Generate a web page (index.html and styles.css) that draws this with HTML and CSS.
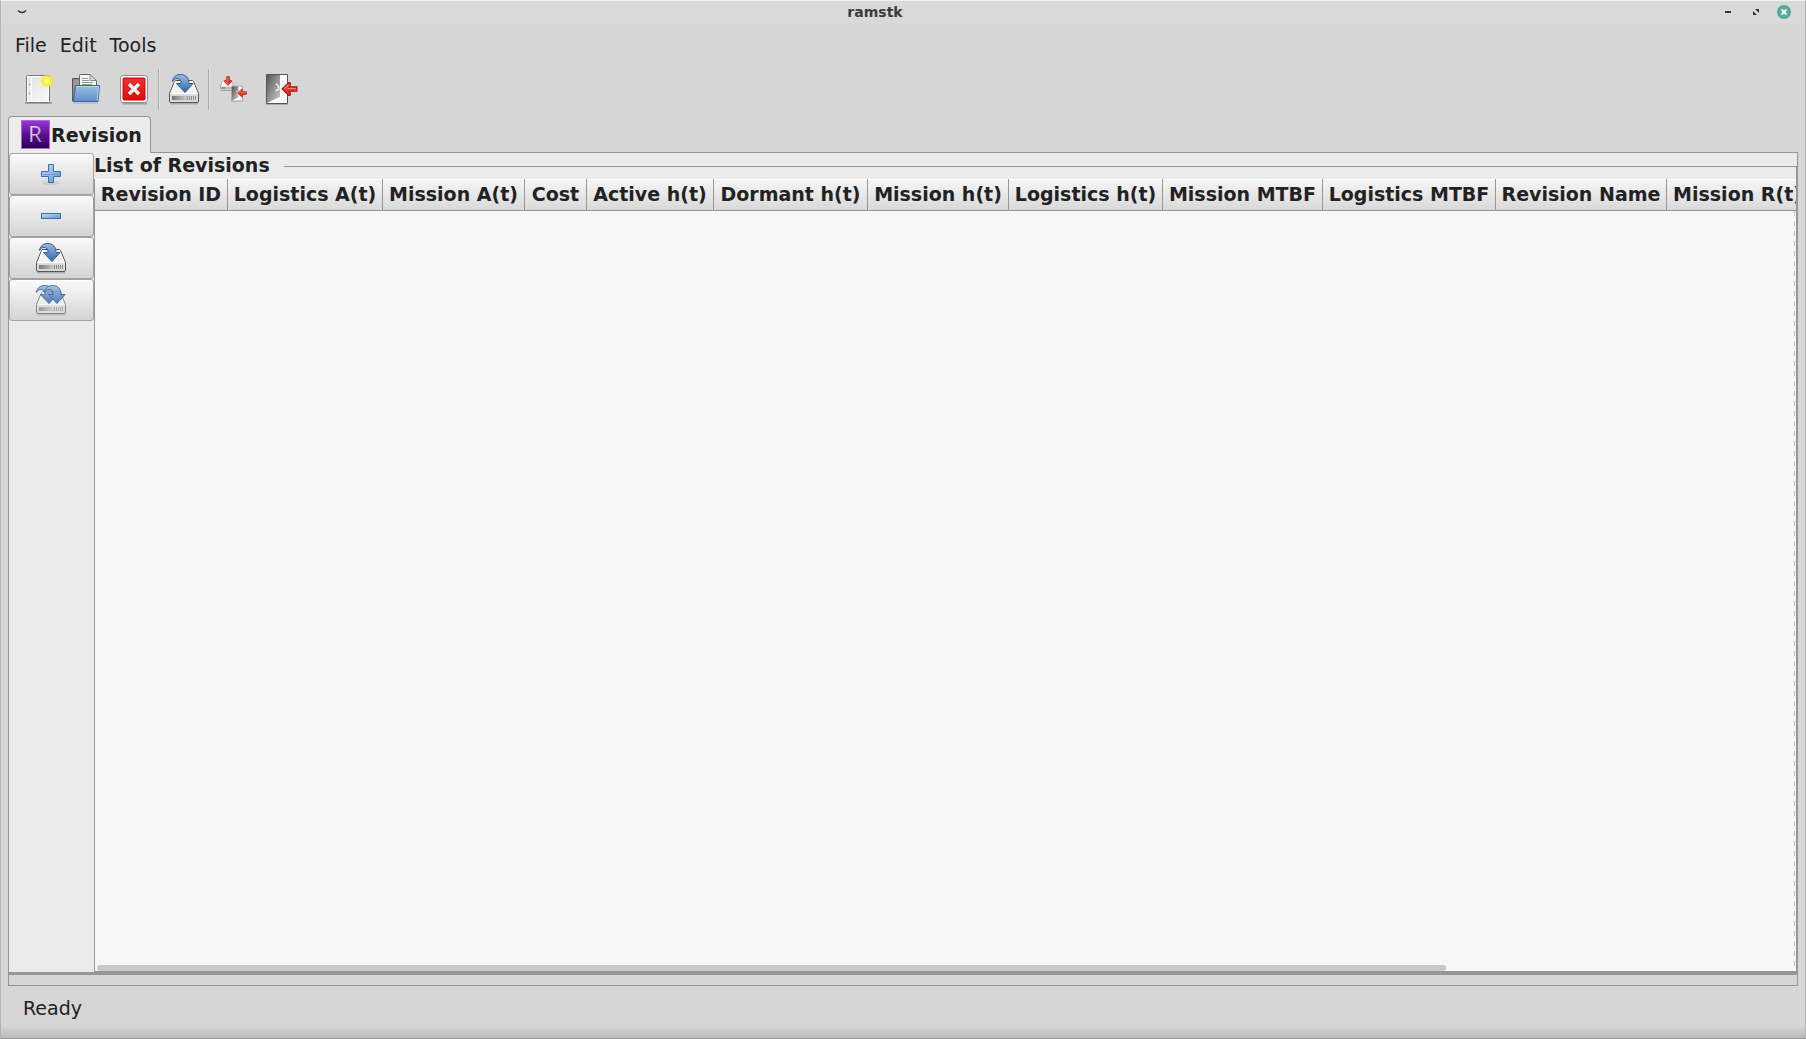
FILE: index.html
```html
<!DOCTYPE html>
<html lang="en">
<head>
<meta charset="utf-8">
<title>ramstk</title>
<link rel="stylesheet" href="styles.css">
</head>
<body>
<svg class="defs" width="0" height="0" aria-hidden="true">
  <defs>
    <linearGradient id="paper" x1="0" y1="0" x2="1" y2="1"><stop offset="0" stop-color="#e2e2e2"/><stop offset="1" stop-color="#fafafa"/></linearGradient>
    <radialGradient id="glow"><stop offset="0" stop-color="#ffffe0"/><stop offset=".3" stop-color="#fff75a"/><stop offset=".7" stop-color="#f8ee20" stop-opacity=".85"/><stop offset="1" stop-color="#f5e900" stop-opacity="0"/></radialGradient>
    <linearGradient id="folder" x1="0" y1="0" x2="0" y2="1"><stop offset="0" stop-color="#9dbde2"/><stop offset="1" stop-color="#5b8fcd"/></linearGradient>
    <linearGradient id="red" x1="0" y1="0" x2="0" y2="1"><stop offset="0" stop-color="#f03030"/><stop offset="1" stop-color="#d80e0e"/></linearGradient>
    <linearGradient id="arrow" x1="0" y1="0" x2="0" y2="1"><stop offset="0" stop-color="#9cbce0"/><stop offset="1" stop-color="#3568ae"/></linearGradient>
    <linearGradient id="lid" x1="0" y1="0" x2="0" y2="1"><stop offset="0" stop-color="#ffffff"/><stop offset="1" stop-color="#dcdcdc"/></linearGradient>
    <linearGradient id="door" x1="0" y1="0" x2="1" y2="1"><stop offset="0" stop-color="#555"/><stop offset="1" stop-color="#d0d0d0"/></linearGradient>
    <linearGradient id="vent" x1="0" y1="0" x2="1" y2="0"><stop offset="0" stop-color="#777"/><stop offset="1" stop-color="#ccc"/></linearGradient>
    <linearGradient id="blue" x1="0" y1="0" x2="1" y2="1"><stop offset="0" stop-color="#c3dbf1"/><stop offset="1" stop-color="#5f97d2"/></linearGradient>
    <symbol id="drive" viewBox="0 0 32 32">
      <path d="M2 30.500h28" stroke="#000" stroke-opacity=".2" stroke-width="2"/>
      <path d="M6.500 8.500Q7 7.500 8 7.500H24Q25 7.500 25.500 8.500L30.500 20.500V28Q30.500 29.500 29 29.500H3Q1.500 29.500 1.500 28V20.500Z" fill="url(#lid)" stroke="#555"/>
      <path d="M7.500 9H24.500L29 20.500H3Z" fill="#f2f2f2" stroke="#fff"/>
      <path d="M2.500 21.500H29.500V28.500H2.500Z" fill="#d8d8d8"/>
      <rect x="4" y="23" width="15" height="4" fill="url(#vent)"/>
      <path d="M19.500 23v4M21.500 23v4M23.500 23v4M25.500 23v4M27.500 23v4" stroke="#8a8a8a"/>
    </symbol>
    <symbol id="curve" viewBox="0 0 32 32">
      <path d="M4.500 8.500C5 4 8.500 1.500 12.500 1.500C18 1.500 21 5 21 10.500H25L17 19.500L8.500 10.500H13C13.500 7.500 11.500 5.500 9 5.500C7 5.500 5.500 6.500 4.500 8.500Z" fill="url(#arrow)" stroke="#2b5a9c"/>
    </symbol>
    <symbol id="redleft" viewBox="0 0 16 14">
      <path d="M1 7L7 1.200Q9 .5 9 2.500L7.800 4.800H15V9.200H7.800L9 11.500Q9 13.500 7 12.800Z" fill="#e6372c" stroke="#a51510"/>
      <path d="M3 7L7 3M6 6.500H14" stroke="#ff8a78" fill="none"/>
    </symbol>
    <symbol id="exitdoor" viewBox="0 0 24 32">
      <path d="M1 31.500H23" stroke="#000" stroke-opacity=".2" stroke-width="1"/>
      <path d="M1.500 1.500H22.500V30.500H1.500Z" fill="#f4f4f4" stroke="#555"/>
      <path d="M2 2H15V24L2 30Z" fill="url(#door)"/>
      <path d="M15 2L15 24L2 30H22V2Z" fill="#fff" fill-opacity=".6"/>
      <path d="M11 12Q12 10 13.500 14L14 16L10.500 18" fill="none" stroke="#eee" stroke-width="1.500"/>
    </symbol>
  </defs>
</svg>

<div class="window">
  <header class="titlebar">
    <button class="wm" aria-label="Window menu"><svg width="12" height="6" viewBox="0 0 12 6"><path d="M2 1.500Q6 5.500 10 1.500" fill="none" stroke="#333" stroke-width="1.500"/></svg></button>
    <h1 class="title">ramstk</h1>
    <div class="wm-group">
      <button class="wm" aria-label="Minimize"><svg width="14" height="14" viewBox="0 0 14 14"><path d="M4 6h6v2H4z" fill="#333"/></svg></button>
      <button class="wm" aria-label="Maximize"><svg width="14" height="14" viewBox="0 0 14 14"><path d="M6 4h4v4zM4 6v4h4z" fill="#333"/></svg></button>
      <button class="wm" aria-label="Close"><svg width="14" height="14" viewBox="0 0 14 14"><circle cx="7" cy="7" r="7" fill="#55a998"/><path d="M4.500 4.500l5 5M9.500 4.500l-5 5" stroke="#fff" stroke-width="2"/></svg></button>
    </div>
  </header>

  <nav class="menubar">
    <button class="menu">File</button>
    <button class="menu">Edit</button>
    <button class="menu">Tools</button>
  </nav>

  <div class="toolbar" role="toolbar">
    <button class="tool" aria-label="New">
      <svg width="32" height="32" viewBox="0 0 32 32">
        <path d="M3 30H30" stroke="#000" stroke-opacity=".25" stroke-width="2"/>
        <rect x="4.500" y="2.500" width="23" height="27" rx="1" fill="url(#paper)" stroke="#777"/>
        <rect x="5.500" y="3.500" width="21" height="25" fill="none" stroke="#fff"/>
        <path d="M9.500 4v24" stroke="#fff"/><circle cx="7.500" cy="11.500" r=".8" fill="#999"/><circle cx="7.500" cy="20.500" r=".8" fill="#999"/>
        <circle cx="25" cy="8" r="7" fill="url(#glow)"/>
      </svg>
    </button>
    <button class="tool" aria-label="Open">
      <svg width="32" height="32" viewBox="0 0 32 32">
        <path d="M2.500 5.500H11V8H24V28H2.500Z" fill="#8b8b8b" stroke="#555"/>
        <path d="M4 8h6M4 10h6M4 12h6M4 14h6" stroke="#aaa"/>
        <path d="M9.500 15V2.500Q9.500 1.500 10.500 1.500H20L26.500 8V15Z" fill="#f5f5f5" stroke="#666"/>
        <path d="M20 1.500V7.500H26.500Z" fill="#ddd" stroke="#888"/>
        <path d="M12 5.500h6M12 7.500h7M12 9.500h11M12 11.500h10" stroke="#999"/>
        <path d="M5.500 12.500H29.500L28 28.500H3.500Z" fill="url(#folder)" stroke="#3465a4" stroke-linejoin="round"/>
        <path d="M6.500 13.500H28.500L27.200 27.500" fill="none" stroke="#b9d1ec"/>
        <path d="M3 30H28" stroke="#000" stroke-opacity=".2"/>
      </svg>
    </button>
    <button class="tool" aria-label="Delete">
      <svg width="32" height="32" viewBox="0 0 32 32">
        <path d="M4 30.500H29" stroke="#000" stroke-opacity=".25" stroke-width="2"/>
        <rect x="2.500" y="2.500" width="27" height="27" rx="3" fill="#fff" stroke="#8d8d8d"/>
        <rect x="5" y="5" width="22" height="22" rx="1" fill="url(#red)" stroke="#c00"/>
        <path d="M11 11L21 21M21 11L11 21" stroke="#f3f3f3" stroke-width="3.500"/>
      </svg>
    </button>
    <span class="sep"></span>
    <button class="tool" aria-label="Save"><svg width="32" height="32" viewBox="0 0 32 32"><use href="#drive"/><use href="#curve"/></svg></button>
    <span class="sep"></span>
    <button class="tool" aria-label="Save and quit">
      <svg width="32" height="32" viewBox="0 0 32 32">
        <use href="#drive" x="2" y="4" width="14" height="14"/>
        <use href="#exitdoor" x="13" y="12" width="12" height="17"/>
        <use href="#redleft" x="19" y="15" width="10" height="10"/>
        <g transform="rotate(-90 10 8)"><use href="#redleft" x="5" y="3" width="10" height="10"/></g>
      </svg>
    </button>
    <button class="tool" aria-label="Quit">
      <svg width="32" height="32" viewBox="0 0 32 32"><use href="#exitdoor" x="-1" y="0" width="24" height="32"/><use href="#redleft" x="15" y="8" width="17" height="16"/></svg>
    </button>
  </div>

  <main class="notebook">
    <div class="tabs" role="tablist">
      <button class="tab" role="tab" aria-selected="true">
        <svg class="badge" width="29" height="29" viewBox="0 0 29 29">
          <defs>
            <linearGradient id="violet" x1="0" y1="0" x2="0" y2="1"><stop offset="0" stop-color="#9b37d8"/><stop offset=".5" stop-color="#5f0b9a"/><stop offset="1" stop-color="#260052"/></linearGradient>
            <linearGradient id="silver" x1="0" y1="0" x2="1" y2="1"><stop offset="0" stop-color="#fff"/><stop offset="1" stop-color="#888"/></linearGradient>
          </defs>
          <rect x=".5" y=".5" width="28" height="28" fill="url(#violet)" stroke="#a66cd0"/>
          <text class="badge-letter" x="14" y="22" text-anchor="middle" fill="url(#silver)">R</text>
        </svg>
        <span>Revision</span>
      </button>
    </div>
    <div class="page">
      <div class="sidebar">
        <button class="side" aria-label="Add"><svg width="32" height="32" viewBox="0 0 32 32"><ellipse cx="16" cy="25" rx="9" ry="2" fill="#000" opacity=".08"/><path d="M13.500 6.500h5v7h7v5h-7v6h-5v-6h-7v-5h7z" fill="url(#blue)" stroke="#3a6fb0"/><path d="M8 16.500h16" stroke="#6f9fd4"/></svg></button>
        <button class="side" aria-label="Remove"><svg width="32" height="32" viewBox="0 0 32 32"><rect x="6.500" y="13.500" width="19" height="5" fill="url(#blue)" stroke="#3a6fb0"/></svg></button>
        <button class="side" aria-label="Save"><svg width="32" height="32" viewBox="0 0 32 32"><use href="#drive"/><use href="#curve"/></svg></button>
        <button class="side" aria-label="Save all"><svg width="32" height="32" viewBox="0 0 32 32"><use href="#drive" opacity=".65"/><g opacity=".85"><use href="#curve" x="-3"/><use href="#curve" x="5"/></g></svg></button>
      </div>
      <fieldset class="frame">
        <legend>List of Revisions</legend>
        <div class="scroller">
          <table class="list">
            <colgroup>
              <col class="c-id"><col class="c-log-a"><col class="c-mis-a"><col class="c-cost"><col class="c-act-h"><col class="c-dor-h"><col class="c-mis-h"><col class="c-log-h"><col class="c-mis-m"><col class="c-log-m"><col class="c-name"><col class="c-mis-r">
            </colgroup>
            <thead>
              <tr>
                <th>Revision ID</th><th>Logistics A(t)</th><th>Mission A(t)</th><th>Cost</th><th>Active h(t)</th><th>Dormant h(t)</th><th>Mission h(t)</th><th>Logistics h(t)</th><th>Mission MTBF</th><th>Logistics MTBF</th><th>Revision Name</th><th>Mission R(t)</th>
              </tr>
            </thead>
          </table>
          <div class="track"><div class="thumb"></div></div>
        </div>
      </fieldset>
    </div>
    <div class="pane-end"></div>
  </main>

  <footer class="status">Ready</footer>
</div>
</body>
</html>
```
FILE: styles.css
```css
* { box-sizing: border-box; }
body {
  margin: 0;
  color: #222;
  font: 19px/26px "DejaVu Sans", sans-serif;
}
button {
  margin: 0;
  padding: 0;
  border: 0;
  background: none;
  color: inherit;
  font: inherit;
}
svg { display: block; }
.defs { position: absolute; }
.window {
  display: flex;
  flex-direction: column;
  min-height: 100vh;
  border: 1px solid #b4b4b4;
  border-top-color: #f0f0f0;
  border-bottom-color: #999;
  background: linear-gradient(to top, #bababa, #d6d6d6 12px);
}
.titlebar {
  display: flex;
  align-items: center;
  height: 23px;
  padding: 0 14px 1px 15px;
  background: #d9d9d9;
}
.title {
  flex: 1;
  margin: 0;
  padding-left: 1px;
  color: #3c3c3c;
  font-size: 14px;
  line-height: 22px;
  text-align: center;
}
.wm-group {
  display: flex;
  gap: 14px;
}
.menubar {
  display: flex;
  gap: 13px;
  height: 40px;
  padding: 2px 14px 0;
  align-items: center;
}
.toolbar {
  display: flex;
  height: 50px;
  margin-bottom: 2px;
  padding: 0 13px;
  align-items: center;
}
.tool {
  display: flex;
  width: 48px;
  height: 48px;
  align-items: center;
  justify-content: center;
}
.sep {
  width: 2px;
  height: 41px;
  border-left: 1px solid #aaa;
  background: #e2e2e2;
}
.notebook {
  display: flex;
  flex: 1;
  flex-direction: column;
  padding: 0 7px;
}
.tabs {
  display: flex;
  z-index: 1;
  margin-bottom: -1px;
}
.tab {
  display: flex;
  gap: 1px;
  height: 37px;
  padding: 0 8px 1px 12px;
  align-items: center;
  border: 1px solid #969696;
  border-bottom: 0;
  border-radius: 4px 4px 0 0;
  background: #ececec;
  font-weight: bold;
}
.badge { overflow: visible; }
.badge-letter { font: 22px "Open Sans", sans-serif; }
.page {
  display: flex;
  flex: 1;
  border: 1px solid #969696;
  border-bottom-width: 3px;
  background: #ebebeb;
}
.sidebar {
  display: flex;
  flex-direction: column;
  width: 85px;
}
.side {
  display: flex;
  height: 42px;
  padding-right: 2px;
  align-items: center;
  justify-content: center;
  border: 1px solid #a2a2a2;
  border-radius: 3px;
  background: linear-gradient(#fafafa, #d4d4d4);
  box-shadow: inset 0 1px #fff;
}
.frame {
  display: flex;
  flex: 1;
  flex-direction: column;
  min-width: 0;
  margin: 0;
  padding: 0;
  border: 1px solid #969696;
}
legend {
  margin-left: -1px;
  padding: 0 14px 2px 0;
  background: #ebebeb;
  font-weight: bold;
  line-height: 24px;
}
.scroller {
  position: relative;
  flex: 1;
  overflow: hidden;
  background: linear-gradient(#c2c2c2 50%, transparent 50%) right 1px top 32px / 1px 10px repeat-y #f7f7f7;
}
.list {
  width: 1714px;
  border-collapse: separate;
  border-spacing: 0;
  table-layout: fixed;
}
.c-id { width: 133px; }
.c-log-a { width: 155px; }
.c-mis-a { width: 142px; }
.c-cost { width: 62px; }
.c-act-h { width: 127px; }
.c-dor-h { width: 154px; }
.c-mis-h { width: 141px; }
.c-log-h { width: 154px; }
.c-mis-m { width: 160px; }
.c-log-m { width: 173px; }
.c-name { width: 171px; }
.c-mis-r { width: 142px; }
.list th {
  height: 32px;
  padding: 0 0 2px;
  border-right: 1px solid #969696;
  border-bottom: 1px solid #969696;
  background: linear-gradient(#f6f6f6, #d9d9d9);
  box-shadow: inset 0 1px #fff;
  white-space: nowrap;
}
.track {
  position: absolute;
  right: 0;
  bottom: 0;
  left: 2px;
}
.thumb {
  width: 79.400%;
  height: 6px;
  border-radius: 3px;
  background: #c9c9c9;
}
.pane-end {
  height: 11px;
  border: 1px solid #969696;
  border-top: 0;
}
.status {
  height: 52px;
  padding: 9px 22px;
}
```
